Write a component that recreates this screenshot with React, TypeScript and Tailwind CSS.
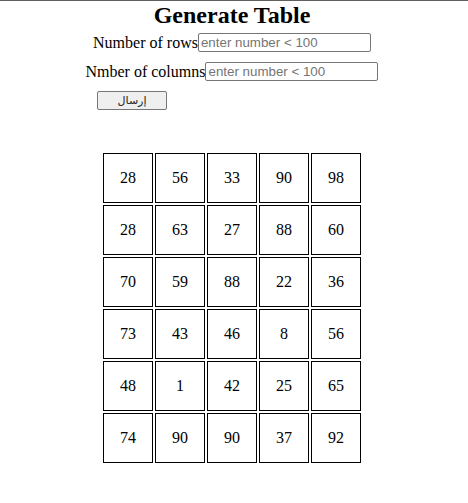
const rows = [
  [28, 56, 33, 90, 98],
  [28, 63, 27, 88, 60],
  [70, 59, 88, 22, 36],
  [73, 43, 46, 8, 56],
  [48, 1, 42, 25, 65],
  [74, 90, 90, 37, 92],
];

export default function App() {
  return (
    <div className="min-h-[503px] border-t border-[#606060] bg-white text-black">
      <div className="flex w-[464px] flex-col items-center font-['Liberation_Serif',serif]">
        <h1 className="text-[24px] font-bold leading-[28px]">Generate Table</h1>

        {/* rows input */}
        <div className="mt-[4px] flex items-center text-[16px] leading-[18px]">
          <label>Number of rows</label>
          <input
            type="text"
            placeholder="enter number < 100"
            className="box-border h-[19px] w-[173px] rounded-[2px] border border-[#767676] px-[2px] font-['Liberation_Sans',sans-serif] text-[13.33px] placeholder:text-[#757575]"
          />
        </div>

        {/* columns input */}
        <div className="mt-[10px] flex items-center text-[16px] leading-[18px]">
          <label>Nmber of columns</label>
          <input
            type="text"
            placeholder="enter number < 100"
            className="box-border h-[19px] w-[173px] rounded-[2px] border border-[#767676] px-[2px] font-['Liberation_Sans',sans-serif] text-[13.33px] placeholder:text-[#757575]"
          />
        </div>

        <button
          type="button"
          className="mt-[10px] ml-[97px] box-border flex h-[19px] w-[70px] items-center justify-center self-start rounded-[2px] border border-[#767676] bg-[#efefef] font-['DejaVu_Sans',sans-serif] text-[11px] leading-none text-[#222]"
        >
          إرسال
        </button>

        <table className="mt-[41px] border-separate border-spacing-[2px] text-[16px]">
          <tbody>
            {rows.map((r, i) => (
              <tr key={i}>
                {r.map((n, j) => (
                  <td
                    key={j}
                    className="box-border h-[50px] w-[50px] border border-black p-0 text-center align-middle"
                  >
                    {n}
                  </td>
                ))}
              </tr>
            ))}
          </tbody>
        </table>
      </div>
    </div>
  );
}
